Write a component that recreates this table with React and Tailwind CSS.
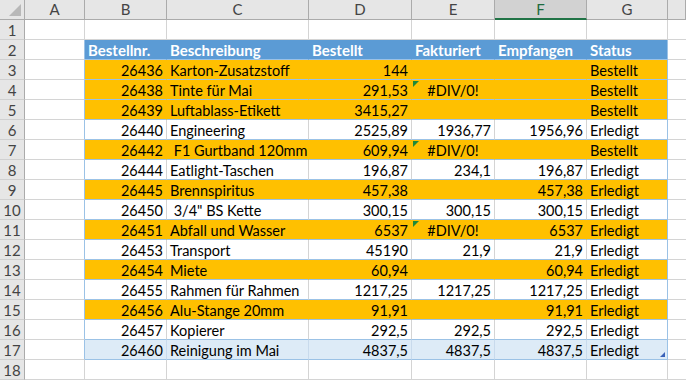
import React from "react";

const rows = [
  { t: "o", b: "26436", c: "Karton-Zusatzstoff", d: "144", e: "", f: "", g: "Bestellt" },
  { t: "o", b: "26438", c: "Tinte für Mai", d: "291,53", e: "#DIV/0!", f: "", g: "Bestellt", err: true },
  { t: "o", b: "26439", c: "Luftablass-Etikett", d: "3415,27", e: "", f: "", g: "Bestellt" },
  { t: "w", b: "26440", c: "Engineering", d: "2525,89", e: "1936,77", f: "1956,96", g: "Erledigt" },
  { t: "o", b: "26442", c: " F1 Gurtband 120mm", d: "609,94", e: "#DIV/0!", f: "", g: "Bestellt", err: true },
  { t: "w", b: "26444", c: "Eatlight-Taschen", d: "196,87", e: "234,1", f: "196,87", g: "Erledigt" },
  { t: "o", b: "26445", c: "Brennspiritus", d: "457,38", e: "", f: "457,38", g: "Erledigt" },
  { t: "w", b: "26450", c: " 3/4\" BS Kette", d: "300,15", e: "300,15", f: "300,15", g: "Erledigt" },
  { t: "o", b: "26451", c: "Abfall und Wasser", d: "6537", e: "#DIV/0!", f: "6537", g: "Erledigt", err: true },
  { t: "w", b: "26453", c: "Transport", d: "45190", e: "21,9", f: "21,9", g: "Erledigt" },
  { t: "o", b: "26454", c: "Miete", d: "60,94", e: "", f: "60,94", g: "Erledigt" },
  { t: "w", b: "26455", c: "Rahmen für Rahmen", d: "1217,25", e: "1217,25", f: "1217,25", g: "Erledigt" },
  { t: "o", b: "26456", c: "Alu-Stange 20mm", d: "91,91", e: "", f: "91,91", g: "Erledigt" },
  { t: "w", b: "26457", c: "Kopierer", d: "292,5", e: "292,5", f: "292,5", g: "Erledigt" },
  { t: "s", b: "26460", c: "Reinigung im Mai", d: "4837,5", e: "4837,5", f: "4837,5", g: "Erledigt", last: true },
];

const FONT = { fontFamily: "Lato, 'Open Sans', sans-serif" };
const base = "relative h-[20px] border-r border-b overflow-hidden whitespace-pre px-[3px] text-[14.5px] leading-[21px] text-black";

function bgFor(t) {
  if (t === "o") return "bg-[#ffc000] border-b-[#9bc2e6]";
  if (t === "s") return "bg-[#ddebf7] border-b-[#9bc2e6]";
  return "bg-white border-b-[#9bc2e6]";
}
function vFor(t) {
  if (t === "o") return "border-r-[#ffc000]";
  if (t === "s") return "border-r-[#c8daec]";
  return "border-r-[#d4d4d4]";
}

function RowHead({ n }) {
  return (
    <div className="h-[20px] bg-[#e6e6e6] border-r border-r-[#ababab] border-b border-b-[#d0d0d0] text-center text-[15px] leading-[20px] text-[#444]">
      {n}
    </div>
  );
}

function Plain({ last, blueRight }) {
  const cls = blueRight
    ? "h-[20px] bg-white border-r border-r-[#9bc2e6] border-b border-b-[#d4d4d4]"
    : last
    ? "h-[20px] bg-white border-b border-b-[#d4d4d4]"
    : "h-[20px] bg-white border-r border-r-[#d4d4d4] border-b border-b-[#d4d4d4]";
  return <div className={cls} />;
}

export default function App() {
  const cols = ["A", "B", "C", "D", "E", "F", "G", ""];
  return (
    <div className="w-[686px] h-[383px] overflow-hidden bg-white" style={FONT}>
      <div className="grid grid-cols-[25px_60px_82px_142px_103px_83px_92px_81px_1fr]">
        {/* column header */}
        <div className="relative h-[20px] bg-[#e6e6e6] border-r border-r-[#ababab] border-b border-b-[#ababab]">
          <div className="absolute right-[3px] bottom-[3px] w-0 h-0 border-b-[12px] border-b-[#b8b8b8] border-l-[12px] border-l-transparent" />
        </div>
        {cols.map((c, i) =>
          c === "F" ? (
            <div key={i} className="h-[20px] bg-[#d2d2d2] border-r border-r-[#ababab] border-b-2 border-b-[#217346] text-center text-[15px] leading-[19px] text-[#1e6b3f]">
              {c}
            </div>
          ) : (
            <div key={i} className="h-[20px] bg-[#e6e6e6] border-r border-r-[#ababab] border-b border-b-[#ababab] text-center text-[15px] leading-[19px] text-[#444]">
              {c}
            </div>
          )
        )}

        {/* row 1 */}
        <RowHead n={1} />
        <Plain />
        <Plain />
        <Plain />
        <Plain />
        <Plain />
        <Plain />
        <Plain />
        <Plain last />

        {/* row 2 header */}
        <RowHead n={2} />
        <Plain blueRight />
        {["Bestellnr.", "Beschreibung", "Bestellt", "Fakturiert", "Empfangen", "Status"].map((h, i) => (
          <div
            key={i}
            className={
              i === 5
                ? "h-[20px] bg-[#5b9bd5] border-r border-r-[#9bc2e6] border-b border-b-[#9bc2e6] px-[3px] text-[15px] leading-[21px] font-bold text-white whitespace-pre overflow-hidden"
                : "h-[20px] bg-[#5b9bd5] border-r border-r-[#5b9bd5] border-b border-b-[#9bc2e6] px-[3px] text-[15px] leading-[21px] font-bold text-white whitespace-pre overflow-hidden"
            }
          >
            {h}
          </div>
        ))}
        <Plain last />

        {rows.map((r, i) => {
          const bg = bgFor(r.t);
          const v = vFor(r.t);
          return (
            <React.Fragment key={i}>
              <RowHead n={i + 3} />
              <Plain blueRight />
              <div className={`${base} ${bg} ${v} text-right`}>{r.b}</div>
              <div className={`${base} ${bg} ${v}`}>{r.c}</div>
              <div className={`${base} ${bg} ${v} text-right`}>{r.d}</div>
              <div className={`${base} ${bg} ${v} ${r.err ? "text-center" : "text-right"}`}>
                {r.err && (
                  <div className="absolute left-[1px] top-[1px] w-0 h-0 border-t-[6px] border-t-[#1f8a3a] border-r-[6px] border-r-transparent" />
                )}
                {r.e}
              </div>
              <div className={`${base} ${bg} ${v} text-right`}>{r.f}</div>
              <div className={`${base} ${bg} border-r-[#9bc2e6]`}>
                {r.g}
                {r.last && (
                  <div className="absolute right-[2px] bottom-[2px] w-0 h-0 border-b-[5px] border-b-[#3a62b8] border-l-[5px] border-l-transparent" />
                )}
              </div>
              <Plain last />
            </React.Fragment>
          );
        })}

        {/* row 18 */}
        <RowHead n={18} />
        <Plain />
        <Plain />
        <Plain />
        <Plain />
        <Plain />
        <Plain />
        <Plain />
        <Plain last />
      </div>
    </div>
  );
}
